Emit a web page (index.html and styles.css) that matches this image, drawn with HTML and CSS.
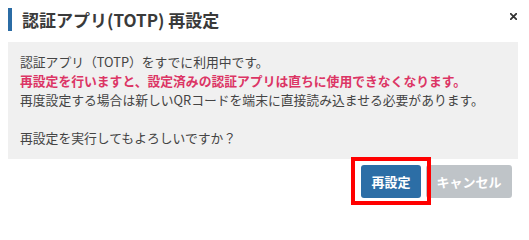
FILE: index.html
```html
<!DOCTYPE html>
<html lang="ja">
<head>
<meta charset="utf-8">
<link rel="stylesheet" href="styles.css">
</head>
<body>
<div class="dialog">
  <div class="header">
    <h1 class="title">認証アプリ(TOTP) 再設定</h1>
    <button class="close" aria-label="close">
      <svg width="7" height="7" viewBox="0 0 7 7"><path d="M0.8 0.8L6.2 6.2M6.2 0.8L0.8 6.2" stroke="#333" stroke-width="1.8" stroke-linecap="square"/></svg>
    </button>
  </div>
  <div class="message">
    認証アプリ（TOTP）をすでに利用中です。<br>
    <strong class="warn">再設定を行いますと、設定済みの認証アプリは直ちに使用できなくなります。</strong><br>
    再度設定する場合は新しいQRコードを端末に直接読み込ませる必要があります。<br>
    <br>
    再設定を実行してもよろしいですか？
  </div>
  <div class="footer">
    <span class="highlight"><button class="btn btn-primary">再設定</button></span>
    <button class="btn btn-cancel">キャンセル</button>
  </div>
</div>
</body>
</html>
```
FILE: styles.css
```css
html, body {
  margin: 0;
  padding: 0;
  background: #fff;
}
body {
  font-family: "Noto Sans CJK JP", "Noto Sans", sans-serif;
  color: #444;
}
.dialog {
  width: 510px;
  padding: 8px 0 0 8px;
}
.header {
  display: flex;
  justify-content: space-between;
  align-items: flex-start;
  height: 23px;
  border-left: 4px solid #2b6ca5;
}
.title {
  margin: 0;
  padding-left: 10px;
  font-size: 17px;
  font-weight: 700;
  line-height: 23px;
  color: #3a3a3a;
}
.close {
  border: 0;
  background: none;
  padding: 0;
  margin: 5px 1px 0 0;
  width: 7px;
  height: 7px;
  display: flex;
}
.message {
  margin-top: 11px;
  background: #f0f0f0;
  padding: 10px 12px 12px;
  font-size: 12.8px;
  line-height: 19px;
  color: #444;
}
.warn {
  color: #dc3565;
  font-weight: 700;
}
.footer {
  display: flex;
  justify-content: flex-end;
  align-items: flex-start;
  gap: 5px;
  margin-top: 6px;
  padding-right: 6px;
  height: 50px;
}
.highlight {
  position: relative;
  display: block;
  height: 33px;
}
.highlight::after {
  content: "";
  position: absolute;
  left: -10px;
  right: -10px;
  top: -8px;
  bottom: -7px;
  border: 4px solid #ff0000;
  pointer-events: none;
}
.btn {
  display: block;
  height: 33px;
  padding: 0 10.5px;
  margin: 0;
  border: 0;
  border-radius: 3px;
  font-family: "Noto Sans CJK JP", "Noto Sans", sans-serif;
  font-size: 13px;
  font-weight: 700;
  color: #fff;
  line-height: 33px;
  white-space: nowrap;
}
.btn-primary {
  background: #2c6ea6;
}
.btn-cancel {
  background: #bfc4c8;
}
```
